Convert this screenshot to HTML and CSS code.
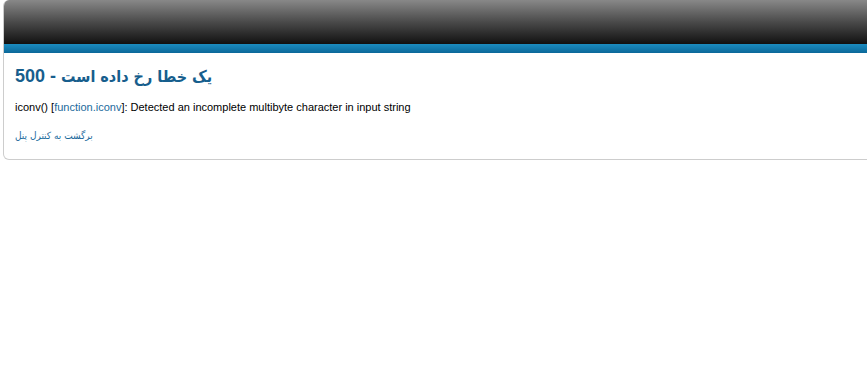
FILE: index.html
```html
<!DOCTYPE html>
<html>
<head>
<meta charset="utf-8">
<link rel="stylesheet" href="styles.css">
</head>
<body>
<div class="box">
  <div class="top"></div>
  <div class="bar"></div>
  <div class="content">
    <h1 class="title">500 - <span class="fa">یک خطا رخ داده است</span></h1>
    <p class="msg">iconv() [<a class="fn" href="#">function.iconv</a>]: Detected an incomplete multibyte character in input string</p>
    <p class="back"><a href="#" class="backlink">برگشت به کنترل پنل</a></p>
  </div>
</div>
</body>
</html>
```

FILE: styles.css
```css
html, body {
  margin: 0;
  padding: 0;
  background: #fff;
  overflow: hidden;
  font-family: "Liberation Sans", "DejaVu Sans", Arial, sans-serif;
}
.box {
  margin-left: 3px;
  width: 900px;
  border: 1px solid #cdcdcd;
  border-top: 0;
  border-radius: 6px;
  overflow: hidden;
  background: #fff;
}
.top {
  height: 44px;
  background: linear-gradient(to bottom, #888888 0%, #4a4a4a 50%, #111111 100%);
}
.bar {
  height: 9px;
  background: linear-gradient(to bottom, #1b8cc0, #0b6899);
}
.content {
  padding: 12px 11px 16px;
}
.title {
  margin: 0;
  font-size: 18px;
  font-weight: bold;
  color: #175e8d;
  line-height: 22px;
}
.fa {
  font-family: "DejaVu Sans Condensed", "DejaVu Sans", sans-serif;
  font-size: 16px;
}
.msg {
  margin: 12px 0 0;
  font-size: 11px;
  line-height: 14px;
  color: #000;
}
.fn {
  color: #1b6a9c;
  text-decoration: none;
}
.back {
  margin: 15px 0 0;
  font-size: 10px;
  line-height: 14px;
}
.backlink {
  font-family: "DejaVu Sans Condensed", "DejaVu Sans", sans-serif;
  color: #1b6a9c;
  text-decoration: none;
}
```
